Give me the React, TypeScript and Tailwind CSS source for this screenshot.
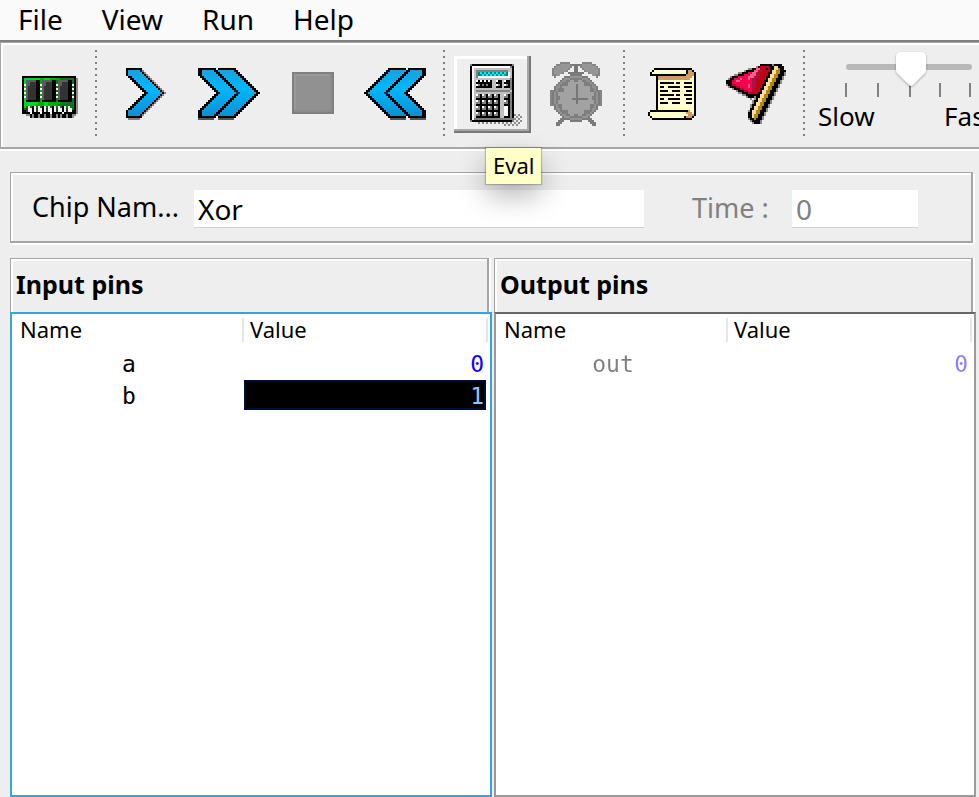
import { Fragment, useState } from "react";
import clsx from "clsx";

type Palette = Record<string, string>;

// turns rows of characters into runs of equal colour
const PixelRows: React.FC<{
  rows: string[];
  palette: Palette;
  x: number;
  y: number;
}> = ({ rows, palette, x, y }) => (
  <g transform={`translate(${x} ${y})`}>
    {rows.map((row, r) => {
      const runs = [...row.matchAll(/(.)\1*/g)];
      return runs
        .filter((run) => palette[run[1]])
        .map((run) => (
          <rect
            key={`${r}-${run.index}`}
            x={run.index}
            y={r}
            width={run[0].length}
            height={1}
            fill={palette[run[1]]}
          />
        ));
    })}
  </g>
);

const Canvas: React.FC<{ children: React.ReactNode }> = ({ children }) => (
  <svg
    viewBox="0 0 38 38"
    className="w-[76px] h-[76px] shrink-0"
    shapeRendering="crispEdges"
    aria-hidden="true"
  >
    {children}
  </svg>
);

const span = (x: number, y: number, w: number) => `M${x} ${y}h${w}v1h${-w}z`;

const disc = (cx: number, cy: number, r: number) => {
  let d = "";
  for (let y = cy - r; y < cy + r; y++) {
    const half = Math.round(Math.sqrt(r * r - (y + 0.5 - cy) ** 2));
    d += span(cx - half, y, half * 2);
  }
  return d;
};

const CHIP_ROWS = [
  "KKKKKKKKKKKKKKKKKKKKKKKKKKK.",
  "KGGGGGGGGggGGGgggggdddddddKs",
  "KGaaaaaKKgaaaaaKKdaaaaaKKdKs",
  "KGaabbbKKgaabbbKKdaabbbKKdKs",
  "KWaabbbKKWaabbbKKWaabbbKKWKs",
  "KGabbbbKKgabbbbKKdabbbbKKdKs",
  "KWabbbbKKWabbbbKKWabbbbKKWKs",
  "KGabbbbKKgabbbbKKdabbbbKKdKs",
  "KWabbbbKKWabbbbKKWabbbbKKWKs",
  "KGabbbbKKgabbbbKKdabbbbKKdKs",
  "KWabbbbKKWabbbbKKWabbbbKKWKs",
  "KGabbbbKKgabbbbKKdabbbbKKdKs",
  "KGKKKKKKKgKKKKKKKdKKKKKKKdKs",
  "KGGGGGGGgggGGggggggdddddddKs",
  "KGGGGGGggggGGgggggddddddddKs",
  "KGdWdKWdWdKWdWdKWdWdKWdWddKs",
  "KdbWWKWbWWKWbWWKWbWWKWbWWdKs",
  "KKbWWKWbWWKWbWWKWbWWKWbWWKKs",
  "KKKKWKKKKWKKKKWKKKKKWKKKKKKs",
  "..ssKsKKsKKsKKsKKsKsKKsKKss.",
  "....KsKKsKKsKKsKKsKsKKsKKs..",
];

const ChipIcon = () => (
  <Canvas>
    <PixelRows
      x={6}
      y={10}
      rows={CHIP_ROWS}
      palette={{
        K: "#000",
        G: "#00d822",
        g: "#00b000",
        d: "#087818",
        a: "#5c5c5c",
        b: "#333",
        W: "#f4f4f4",
        s: "#8c8c8c",
      }}
    />
  </Canvas>
);

const STEPS = Array.from({ length: 25 }, (_, r) => ({
  r,
  depth: Math.min(r, 24 - r),
}));

const SingleArrow = () => {
  let fill = "";
  let line = "";
  let soft = span(1, 25, 6);
  STEPS.forEach(({ r, depth }) => {
    const left = depth < 4 ? 0 : depth - 3;
    const right = 7 + depth - (depth > 0 ? 1 : 0);
    fill += span(left, r, right - left);
    if (depth === 0) {
      line += span(0, r, 8);
      return;
    }
    line += span(left, r, depth < 4 ? 1 : 2) + span(right, r, 1);
    soft += span(right + 1, r, 1);
  });
  return (
    <Canvas>
      <g transform="translate(10 6)">
        <path d={soft} fill="#8a8080" />
        <path d={fill} fill="url(#arrow-blue)" />
        <path d={line} fill="#000" />
      </g>
    </Canvas>
  );
};

const DoubleArrow: React.FC<{ back?: boolean }> = ({ back }) => {
  let fill = "";
  let line = "";
  STEPS.forEach(({ r, depth }) => {
    const left = depth < 4 ? 0 : depth - 3;
    const mid = 7 + depth;
    const right = 17 + depth;
    if (depth === 0) {
      line += span(0, r, 9) + span(10, r, 9);
      return;
    }
    fill += span(left, r, right - left);
    line += span(left, r, 2);
    line += span(mid, r, 2);
    line += span(right, r, 2);
  });
  return (
    <Canvas>
      <g
        transform={back ? "translate(34 6) scale(-1 1)" : "translate(4 6)"}
      >
        <path d={span(0, 25, 8) + span(10, 25, 8)} fill="#555" />
        <path d={fill} fill="url(#arrow-blue)" />
        <path d={line} fill="#000" />
        <path d={span(19, 12, 2)} fill="#063a66" />
      </g>
    </Canvas>
  );
};

const StopIcon = () => (
  <Canvas>
    <rect x="9" y="8" width="21" height="21" fill="#808080" />
    <rect x="10" y="9" width="19" height="19" fill="#8c8c8c" />
    <rect x="10" y="9" width="18" height="18" fill="#999" />
    <rect x="11" y="10" width="17" height="17" fill="#919191" />
  </Canvas>
);

const CALCULATOR_ROWS = [
  "gKKKKKKKKKKKKKKKKKKKKg....",
  "KWWWWWWWWWWWWWWWWWWWgK....",
  "KWcccccccccccccccccccK....",
  "KWcggggggggggggggggccK....",
  "KWcgtCtCtCtCtCtCtCtWcK....",
  "KWcgtTCTCTCTCTCTCTtWcK....",
  "KWcgWWWWWWWWWWWWWWWWcK....",
  "KWccccccccccccccccccgK....",
  "KWcWKWKWKWKccWKKcWKKgK....",
  "KWcKKKKKKKKccKKKcKKKgK....",
  "KWcWgKgKgKKccWgKcWgKgK....",
  "KWcKKKKKKKKccKKKcKKKgK....",
  "KWccccccccccccccccccgK....",
  "KWcgggggggggggggggggcK....",
  "KWccccccccccccccccccgK....",
  "KWcWgKWgKWgKWgKccWgKgK....",
  "KWcggKggKggKggKccggKgK....",
  "KWcKKKKKKKKKKKKccKKKgK....",
  "KWcWgKWgKWgKWgKccWgKgK....",
  "KWcggKggKggKggKccggKgK....",
  "KWcKKKKKKKKKKKKccKKKgK....",
  "KWcWgKWgKWgKWgKccWWKgK....",
  "KWcggKggKggKggKccWWKgK....",
  "KWcKKKKKKKKKKKKccWWKgK....",
  "KWcWgKWgKWgKWgKccWWKgK....",
  "KWcggKggKggKggKccWWKgKs.s.",
  "KWcKKKKKKKKKKKKccKKKgK.s.s",
  "KWggggggggggggggggggggs.s.",
  "gKKKKKKKKKKKKKKKKKKKKg.s.s",
  "....s.s.s.s.s.s.s.s.s.s.s.",
  ".................s.s.s.s..",
];

const CalculatorIcon = () => (
  <Canvas>
    <PixelRows
      x={8}
      y={4}
      rows={CALCULATOR_ROWS}
      palette={{
        K: "#000",
        W: "#fff",
        c: "#c0c0c0",
        g: "#808080",
        C: "#00f4f4",
        T: "#009a9a",
        t: "#008080",
        s: "#8c8c8c",
      }}
    />
  </Canvas>
);

const BELL_ROWS = [
  "....ddddd.",
  "..ddmmmmmd",
  ".dmmmmmmmd",
  "dmmmmmmmd.",
  "dmmmmmmd..",
  "dmmmmd....",
  "ddmm......",
  ".d........",
];

const CLOCK_MARKS = [
  [12, 8],
  [7, 10],
  [17, 10],
  [5, 13],
  [20, 13],
  [3, 17],
  [21, 17],
  [4, 21],
  [20, 21],
  [7, 24],
  [17, 24],
  [12, 26],
];

const AlarmIcon = () => (
  <Canvas>
    <g transform="translate(6 3)">
      <PixelRows
        x={1}
        y={0}
        rows={BELL_ROWS}
        palette={{ d: "#858585", m: "#969696" }}
      />
      <g transform="translate(25 0) scale(-1 1)">
        <PixelRows
          x={0}
          y={0}
          rows={BELL_ROWS}
          palette={{ d: "#858585", m: "#969696" }}
        />
      </g>
      <path d="M11 1h4v1h-4zM12 2h2v3h-2zM9 5h8v1h-8z" fill="#787878" />
      <path
        d="M5 28h3v1h-1v1h-1v1h-1v1h-2v-2h1v-1h1zM21 28h-3v1h1v1h1v1h1v1h2v-2h-1v-1h-1z"
        fill="#7c7c7c"
      />
      <path d="M0 14h2v8h-2zM24 14h2v8h-2z" fill="#858585" />
      <path d={disc(13, 18, 12)} fill="#7c7c7c" />
      <path d={disc(13, 18, 11)} fill="#929292" />
      <path d={disc(13, 18, 10)} fill="#7e7e7e" />
      <path d={disc(13, 18, 9)} fill="#a2a2a2" />
      {CLOCK_MARKS.map(([x, y]) => (
        <rect
          key={`${x}-${y}`}
          x={x}
          y={y}
          width="2"
          height="2"
          fill="#7e7e7e"
        />
      ))}
      <path d="M13 11h1v10h-1zM11 18h8v1h-8z" fill="#767676" />
    </g>
  </Canvas>
);

const SCROLL_ROWS = [
  "...KKKKKKKKKKKKKKKKKKK..",
  "..KccccccccccccccccKbbK.",
  ".KcccccccccccccccccKbbbK",
  ".KKKKKKKKKKKKKKKKKKbbbbK",
  "....KbbbbbbbbbbbbbbbbbcK",
  "....KbbbbbbbbbbbbbbbbccK",
  "....KccccccccccccccccccK",
  "....KcKKKKKKKcKKccKKKKcK",
  "....KccccccccccccccccccK",
  "....KcKKccKKKKKKccKKKKcK",
  "....KccccccccccccccccccK",
  "....KcKKKKccKKKKcccKKKcK",
  "....KccccccccccccccccccK",
  "....KcKKKKKKKcKKccKKKKcK",
  "....KccccccccccccccccccK",
  "....KcKKccKKKKKKcccKKKcK",
  "....KccccccccccccccccccK",
  "....KcKKKKccKKKKcccKKKcK",
  "....KccccccccccccccccccK",
  "....KccccccccccccccccccK",
  "....KccccccccccccccccccK",
  ".KKKKKKKKKKKKKKKKKKKbccK",
  "KccccccccccccccccccbbbcK",
  "KcccccccccccccccccccbbbK",
  ".KccccccccccccccccKbbbK.",
  "..KKKKKKKKKKKKKKKKKKKK..",
];

const ScrollIcon = () => (
  <Canvas>
    <PixelRows
      x={7}
      y={6}
      rows={SCROLL_ROWS}
      palette={{ K: "#000", c: "#ffffcc", b: "#d49860" }}
    />
  </Canvas>
);

const FLAG_ROWS = [
  ".................KKKKKKgKKKK..",
  "...............gKrrrrrKKccKKK.",
  "...........ggKKllrrrKrKKccyKK.",
  ".........gKKKKllddrrrrKccyyKKK",
  "......ggKKKpplldrrrrrKKccyyKKg",
  "....ggKKKppplllddrrrrKccyyKKKg",
  "..gKKKppppplllddrrrrKKccyyKKg.",
  ".gKKppplppplpddrrrrrKccyyKKKg.",
  "KKKrpllppppppddrrrrKKccyyKKg..",
  "KKKppppppppppddrrrrKccyyKKKg..",
  "gKKrrpppppplpddrrrKKccyyKKg...",
  ".gKKKrrpppplpddrrrKccyyKKKg...",
  "...gKKKrrppppdrrrKKccyyKKg....",
  ".....gKKKrrpprdrrKccyyKKKg....",
  "......ggKKKrrrrrKKccyyKKg.....",
  "........ggKKKKKKKccyyKKKg.....",
  "..........gKKKgKKccyyKKg......",
  "............g.gKccyyKKKg......",
  ".............gKKccyyKKg.......",
  ".............gKccyyKKKg.......",
  "............gKKccyyKKg........",
  "............gKccyyKKKg........",
  "............KKccyyKKg.........",
  "...........gKccyyKKKg.........",
  "...........KKccyyKKg..........",
  "...........KKcyyKKKg..........",
  "...........KKcyyKKg...........",
  "...........gKKyKKKg...........",
  "............gKKKKg............",
  ".............gKKKg............",
];

const FlagIcon = () => (
  <Canvas>
    <PixelRows
      x={4}
      y={4}
      rows={FLAG_ROWS}
      palette={{
        K: "#000",
        g: "#8c8c8c",
        p: "#f80050",
        l: "#ff6088",
        r: "#c40018",
        d: "#a0184a",
        c: "#ffdda0",
        y: "#b08a00",
      }}
    />
  </Canvas>
);

const TOOLS = [
  [{ name: "Load Chip", icon: <ChipIcon /> }],
  [
    { name: "Single Step", icon: <SingleArrow /> },
    { name: "Run", icon: <DoubleArrow /> },
    { name: "Stop", icon: <StopIcon />, disabled: true },
    { name: "Reset", icon: <DoubleArrow back /> },
  ],
  [
    { name: "Eval", icon: <CalculatorIcon />, active: true },
    { name: "Tick Tock", icon: <AlarmIcon />, disabled: true },
  ],
  [
    { name: "Load Script", icon: <ScrollIcon /> },
    { name: "Breakpoints", icon: <FlagIcon /> },
  ],
];

const SpeedSlider = () => {
  const [speed, setSpeed] = useState(3);

  return (
    <div className="relative w-[184px] shrink-0 mt-px">
      <svg viewBox="0 0 184 50" className="block w-[184px] h-[50px]" aria-hidden="true">
        <rect x="32" y="13" width="126" height="6" rx="3" fill="#b8b8b8" />
        <path
          d="M31 32h2v14h-2zM63 32h2v14h-2zM95 32h2v14h-2zM125 32h2v14h-2zM155 32h2v14h-2z"
          fill="#808080"
        />
        <g transform={`translate(${(speed - 3) * 31} 0)`}>
          <path
            d="M87 1h20q5 0 5 5v13q0 2-1 3l-12 12q-2 2-4 0l-12-12q-1-1-1-3v-13q0-5 5-5z"
            fill="#fff"
            className="drop-shadow-[0_1px_1px_rgba(0,0,0,0.3)]"
          />
        </g>
      </svg>
      <input
        type="range"
        min="1"
        max="5"
        value={speed}
        aria-label="Speed"
        onChange={(e) => setSpeed(Number(e.target.value))}
        className="absolute left-4 top-0 w-[160px] h-9 opacity-0"
      />
      <div className="flex justify-between px-1 text-[26px] leading-[30px]">
        <span>Slow</span>
        <span>Fast</span>
      </div>
    </div>
  );
};

const PinTable: React.FC<{
  title: string;
  pins: { name: string; value: string; selected?: boolean }[];
  readOnly?: boolean;
}> = ({ title, pins, readOnly }) => (
  <section className="flex flex-col min-w-0">
    <h2 className="mr-[3px] h-[54px] flex items-center pl-[5px] pb-[3px] border-t border-l border-r-2 border-[#a5a5a5] shadow-[inset_2px_2px_#fff,2px_0_#fff] text-[25px] leading-8 font-bold">
      {title}
    </h2>
    <div
      className={clsx(
        "flex-1 bg-white border-2 pr-[2px]",
        readOnly ? "border-[#999] border-t-[#666]" : "border-[#35a2e2]"
      )}
    >
      <table className="w-full table-fixed border-collapse">
        <thead>
          <tr className="h-[34px] text-left align-top text-[22px] leading-[22px]">
            <th className="w-[232px] pl-2 pt-1 pb-0 font-normal">
              <div className="h-6 border-r-2 border-[#e5e5e5]">Name</div>
            </th>
            <th className="pl-[6px] pt-1 pb-0 font-normal">
              <div className="h-6 border-r-2 border-[#e5e5e5]">Value</div>
            </th>
          </tr>
        </thead>
        <tbody className="font-['DejaVu_Sans_Mono',monospace] text-[23px] leading-8">
          {pins.map((pin) => (
            <tr
              key={pin.name}
              className={clsx("h-8 align-top", readOnly && "opacity-50")}
            >
              <td className="p-0 pl-[2px] text-center">{pin.name}</td>
              <td className="p-0 pr-[2px]">
                <div
                  className={clsx(
                    "h-[30px] pr-[2px] text-right",
                    pin.selected
                      ? "bg-black text-[#8cc4ff] shadow-[inset_0_0_0_2px_#000c38]"
                      : "text-[#1400ff]"
                  )}
                >
                  {pin.value}
                </div>
              </td>
            </tr>
          ))}
        </tbody>
      </table>
    </div>
  </section>
);

export default function App() {
  const [chipName, setChipName] = useState("Xor");

  return (
    <div className="min-h-screen flex flex-col overflow-hidden bg-[#eee] text-black font-['Noto_Sans','Open_Sans',sans-serif]">
      <svg width="0" height="0" className="absolute" aria-hidden="true">
        <defs>
          <linearGradient
            id="arrow-blue"
            gradientUnits="userSpaceOnUse"
            x1="0"
            y1="0"
            x2="0"
            y2="25"
          >
            <stop offset="0" stopColor="#1a9edc" />
            <stop offset="0.4" stopColor="#00b8fc" />
            <stop offset="1" stopColor="#0e8cd0" />
          </linearGradient>
        </defs>
      </svg>

      <nav className="h-[42px] flex items-center gap-[39px] pl-[18px] pb-[2px] bg-[#fafafa] border-b-2 border-[#808080] text-[28px] leading-8">
        {["File", "View", "Run", "Help"].map((item) => (
          <button key={item}>{item}</button>
        ))}
      </nav>

      <div className="h-[107px] flex items-start pt-[7px] pl-[9px] border-t border-l border-b-2 border-[#a5a5a5] shadow-[inset_2px_2px_#fff,0_2px_#fff]">
        {TOOLS.map((group, i) => (
          <Fragment key={i}>
            <div className="shrink-0 flex gap-[7px] pt-[6px]">
              {group.map((tool) => (
                <div key={tool.name} className="relative">
                  <button
                    aria-label={tool.name}
                    disabled={tool.disabled}
                    className={clsx(
                      "w-[77px] h-[77px] flex",
                      tool.active &&
                        "bg-[#eee] shadow-[inset_-2px_-2px_#777,inset_-4px_-4px_#a8a8a8,inset_3px_3px_#fff]"
                    )}
                  >
                    {tool.icon}
                  </button>
                  {tool.active && (
                    <div
                      role="tooltip"
                      className="absolute z-10 left-8 top-[92px] h-9 px-[7px] bg-[#ffffc8] text-[22px] leading-[35px] shadow-[0_0_1px_1px_rgba(0,0,0,0.2),0_12px_28px_rgba(0,0,0,0.28)]"
                    >
                      {tool.name}
                    </div>
                  )}
                </div>
              ))}
            </div>
            <div className="shrink-0 w-[2px] h-[86px] ml-2 mr-[9px] bg-[repeating-linear-gradient(to_bottom,#808080_0_2px,transparent_2px_6px)]"></div>
          </Fragment>
        ))}
        <SpeedSlider />
      </div>

      <div className="mt-[23px] ml-[10px] mr-[6px] h-[71px] flex items-center pl-[21px] pr-[53px] border-t border-l border-b-2 border-r-2 border-[#a5a5a5] shadow-[inset_2px_2px_#fff,2px_2px_#fff] text-[27px] leading-8">
        <label htmlFor="chip-name" className="w-[162px] shrink-0">
          Chip Nam...
        </label>
        <input
          id="chip-name"
          value={chipName}
          onChange={(e) => setChipName(e.target.value)}
          className="flex-1 min-w-0 h-[37px] mt-[2px] px-1 pt-[2px] bg-white outline-none shadow-[0_1px_#d0d0d0] text-[28px]"
        />
        <label htmlFor="time" className="ml-12 w-[100px] pt-[2px] text-[#808080]">
          Time :
        </label>
        <input
          id="time"
          value="0"
          disabled
          className="w-[126px] h-[37px] mt-[2px] px-1 pt-[2px] bg-white text-[#808080] shadow-[0_1px_#d0d0d0] text-[28px]"
        />
      </div>

      <main className="flex-1 mt-[15px] pl-[10px] pr-[3px] grid grid-cols-2 gap-[2px]">
        <PinTable
          title="Input pins"
          pins={[
            { name: "a", value: "0" },
            { name: "b", value: "1", selected: true },
          ]}
        />
        <PinTable
          title="Output pins"
          pins={[{ name: "out", value: "0" }]}
          readOnly
        />
      </main>
    </div>
  );
}
